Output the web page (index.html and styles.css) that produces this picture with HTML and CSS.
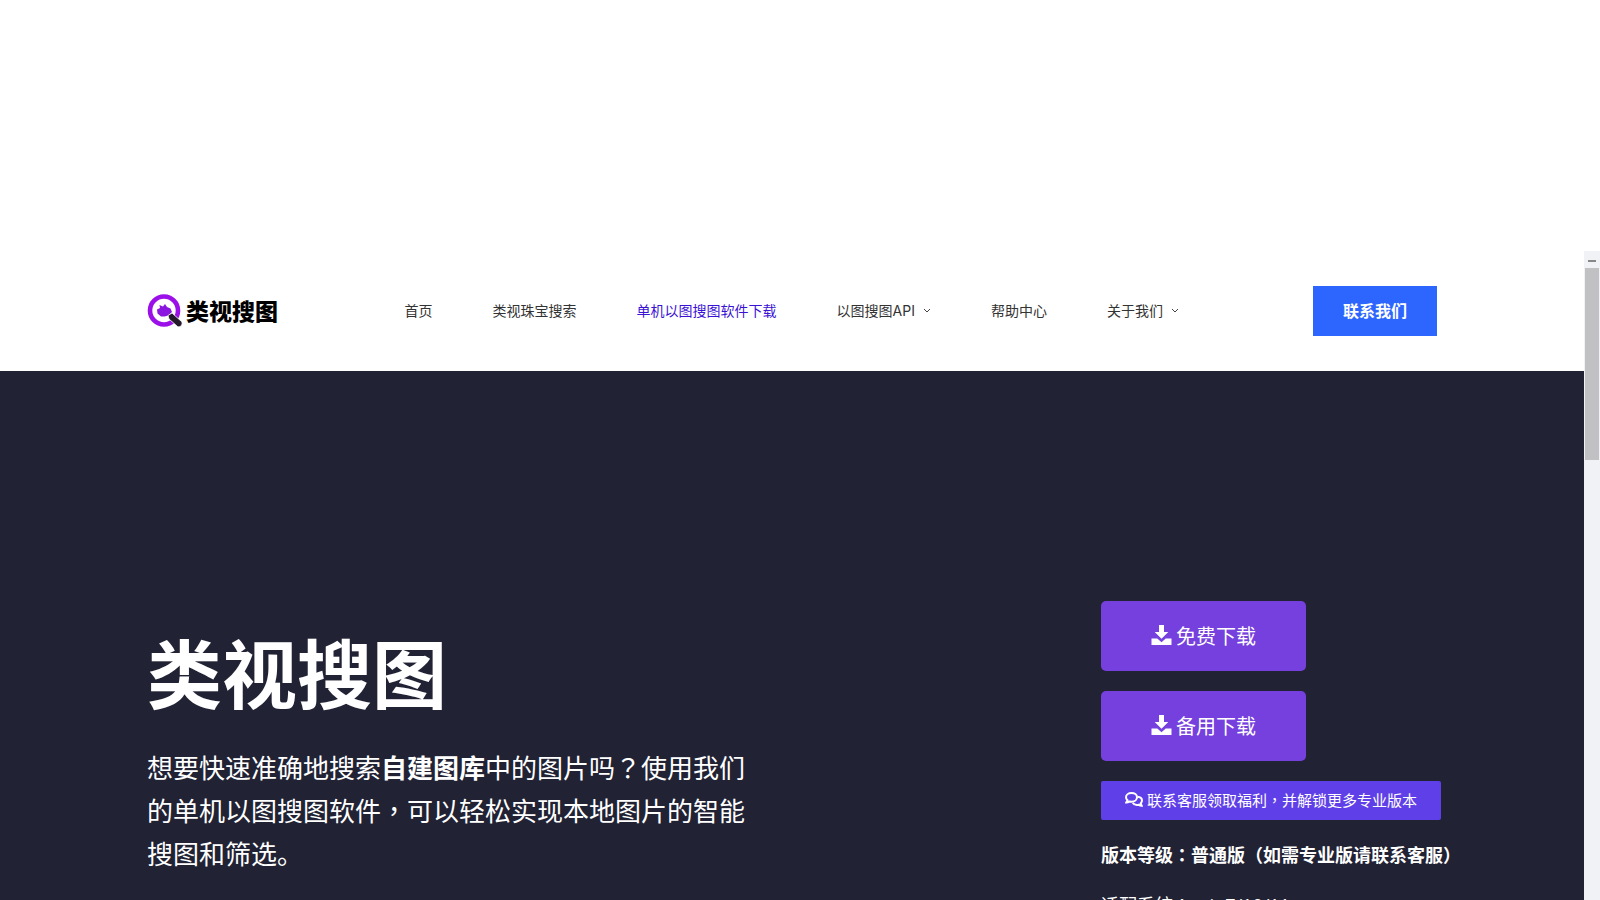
FILE: index.html
```html
<!DOCTYPE html>
<html lang="zh-CN">

<head>
    <meta charset="utf-8">
    <meta content="width=device-width, initial-scale=1.0" name="viewport">

    <title>类视搜图</title>

    <link rel="stylesheet" href="styles.css">
</head>

<body>

    <div class="viewport">
        <div class="page">
            <header class="header">
                <div class="container header-inner">
                    <a class="logo" href="#">
                        <svg class="logo-icon" viewBox="0 0 36 34" aria-hidden="true">
                            <circle cx="17" cy="16.500" r="14" fill="none" stroke="#9b0fe8" stroke-width="4.600"/>
                            <path d="M10 15.500l3-1.500-.5-3 3.500 1.500 2-2.500 2 3 3.500 1.500L25 18l-3.500 3.500-4 1h-3.500l-3.500-3z" fill="#8a16e0"/>
                            <path d="M21 21.500l4-2.500 9.500 8.500c1.800 2.500-1 6.500-4 5l-8.500-7.500z" fill="#241a2b" stroke="#fff" stroke-width=".8"/>
                        </svg>
                        <span>类视搜图</span>
                    </a>

                    <nav class="nav">
                        <a href="#">首页</a>
                        <a href="#">类视珠宝搜索</a>
                        <a class="active" href="#">单机以图搜图软件下载</a>
                        <a href="#">以图搜图API
                            <svg class="chevron" viewBox="0 0 8 6" aria-hidden="true"><path d="M1 1l3 3 3-3"/></svg>
                        </a>
                        <a href="#">帮助中心</a>
                        <a href="#">关于我们
                            <svg class="chevron" viewBox="0 0 8 6" aria-hidden="true"><path d="M1 1l3 3 3-3"/></svg>
                        </a>
                    </nav>

                    <a class="contact-btn" href="#">联系我们</a>
                </div>
            </header>

            <main class="hero">
                <div class="container hero-inner">
                    <div class="intro">
                        <h1>类视搜图</h1>
                        <p>想要快速准确地搜索<strong>自建图库</strong>中的图片吗<span class="punct" lang="zh-TW">？</span>使用我们的单机以图搜图软件<span class="punct" lang="zh-TW">，</span>可以轻松实现本地图片的智能搜图和筛选。</p>
                    </div>

                    <div class="download">
                        <button class="download-btn" type="button">
                            <svg class="download-icon" viewBox="0 0 20 20" aria-hidden="true">
                                <path d="M7.500 0h5v7h4.300L10 13.800 3.200 7h4.300z"/>
                                <path d="M0 13.500h5.800L10 17.200l4.200-3.700H20V20H0z"/>
                            </svg>
                            免费下载
                        </button>
                        <button class="download-btn" type="button">
                            <svg class="download-icon" viewBox="0 0 20 20" aria-hidden="true">
                                <path d="M7.500 0h5v7h4.300L10 13.800 3.200 7h4.300z"/>
                                <path d="M0 13.500h5.800L10 17.200l4.200-3.700H20V20H0z"/>
                            </svg>
                            备用下载
                        </button>
                        <button class="service-btn" type="button">
                            <svg class="chat-icon" viewBox="0 0 18 15" aria-hidden="true">
                                <path d="M6.500 1C3.500 1 1 2.800 1 5.200c0 1.200.6 2.200 1.500 3L1.300 10.500c1.300 0 2.300-.4 3.100-1 .7.200 1.400.2 2.100.2 3 0 5.500-1.900 5.500-4.500S9.500 1 6.500 1z"/>
                                <path d="M12.500 4.800c2.600.2 4.500 1.700 4.500 3.800 0 1.100-.5 2-1.300 2.800l1 2.300c-1.200 0-2.200-.4-2.900-1-2.700.6-5-.2-6.100-2"/>
                            </svg>
                            <span>联系客服领取福利<span class="punct" lang="zh-TW">，</span>并解锁更多专业版本</span>
                        </button>
                        <p class="version">版本等级<span class="punct" lang="zh-TW">：</span>普通版<span class="punct" lang="zh-TW">（</span>如需专业版请联系客服<span class="punct" lang="zh-TW">）</span></p>
                        <p class="system">适配系统<span class="punct" lang="zh-TW">：</span> win7/10/11</p>
                    </div>
                </div>
            </main>
        </div>

        <div class="scrollbar">
            <span class="scroll-arrow"></span>
            <span class="scroll-thumb"></span>
        </div>
    </div>

</body>

</html>
```
FILE: styles.css
```css
* {
    box-sizing: border-box;
}

body {
    font-family: "Open Sans", "Noto Sans CJK SC", sans-serif;
    margin: 0;
    height: 100vh;
    overflow: hidden;
    background-color: #fff;
    color: #fff;
}

a {
    text-decoration: none;
}

/* centred full-width punctuation */
.punct {
    font-family: "Noto Sans CJK TC", sans-serif;
    line-height: 1;
}

.viewport {
    display: flex;
    height: 100vh;
    padding-top: 251px;
}

.page {
    flex: 1;
    display: flex;
    flex-direction: column;
    overflow: hidden;
}

.container {
    width: 100%;
    max-width: 1290px;
    margin: 0 auto;
}

.header {
    background-color: #fff;
    padding: 35px 0;
}

.header-inner {
    display: flex;
    align-items: center;
}

.logo {
    display: flex;
    align-items: center;
    gap: 3px;
    color: #000;
    font-size: 23px;
    font-weight: 900;
    line-height: 34px;
}

.logo-icon {
    width: 36px;
    height: 34px;
}

.nav {
    display: flex;
    gap: 60px;
    margin: 0 134px 0 auto;
    font-family: Inter, "Noto Sans CJK SC", sans-serif;
}

.nav a {
    display: flex;
    align-items: center;
    gap: 8px;
    color: #333;
    font-size: 14px;
    line-height: 20px;
    white-space: nowrap;
}

.nav .active {
    color: #3a12d6;
}

.chevron {
    width: 8px;
    height: 6px;
    fill: none;
    stroke: #444;
}

.contact-btn {
    padding: 0 30px;
    background-color: #2d66ff;
    color: #fff;
    font-size: 16px;
    font-weight: bold;
    line-height: 50px;
}

.hero {
    flex: 1;
    background-color: #212234;
    padding-top: 230px;
}

.hero-inner {
    display: flex;
    justify-content: space-between;
}

.intro {
    width: 604px;
    padding-top: 28px;
}

.intro h1 {
    margin: 0 0 28px;
    font-size: 75px;
    font-weight: bold;
    line-height: 90px;
}

.intro p {
    margin: 0;
    font-size: 26px;
    line-height: 43px;
}

.download {
    display: flex;
    flex-direction: column;
    align-items: flex-start;
    width: 336px;
    white-space: nowrap;
}

.download button {
    display: flex;
    align-items: center;
    gap: 4px;
    border: 0;
    color: #fff;
    font-family: inherit;
}

.download .download-btn {
    height: 70px;
    margin-bottom: 20px;
    padding: 0 50px 2px;
    border-radius: 5px;
    background-color: #7540dd;
    font-size: 20px;
}

.download-icon {
    width: 21px;
    height: 20px;
    fill: #fff;
}

.download .service-btn {
    height: 39px;
    padding: 0 24px 2px;
    border-radius: 2px;
    background-color: #5f40e8;
    font-size: 15px;
}

.chat-icon {
    width: 18px;
    height: 15px;
    fill: none;
    stroke: #fff;
    stroke-width: 2;
}

.version,
.system {
    margin: 0;
    font-size: 18px;
    line-height: 30px;
}

.version {
    margin: 20px 0;
    font-weight: bold;
}

.scrollbar {
    display: flex;
    flex-direction: column;
    align-items: center;
    width: 16px;
    background-color: #f1f2f6;
}

.scroll-arrow {
    width: 8px;
    height: 2px;
    margin: 9px 0 6px;
    background-color: #888;
}

.scroll-thumb {
    width: 14px;
    height: 192px;
    background-color: #c1c1c3;
}
```
